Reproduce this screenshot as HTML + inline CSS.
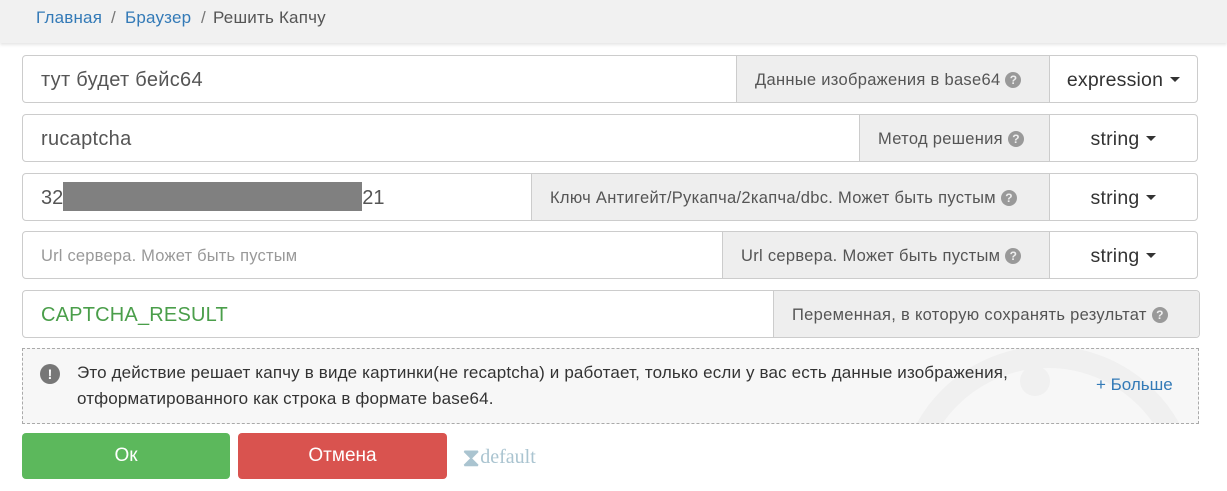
<!DOCTYPE html><html><head><meta charset="utf-8"><style>
html,body{margin:0;width:1227px;height:491px;overflow:hidden}
body{background:#fff;font-family:"Liberation Sans",sans-serif;position:relative}
.hdr{position:absolute;left:0;top:0;width:1227px;height:43px;background:#f1f1f1;box-shadow:0 2px 3px rgba(0,0,0,.1)}
.hdr span{position:absolute;top:8px;font-size:17px;letter-spacing:0.2px}
.row{position:absolute;left:22px;height:46px;border:1px solid #ccc;border-radius:4px;display:flex;overflow:hidden}
.in{flex:1;font-size:20px;letter-spacing:0.3px;color:#555;padding-left:18px;line-height:48px;white-space:nowrap}
.lab{background:#eee;border-left:1px solid #ccc;font-size:16.5px;letter-spacing:0.3px;color:#555;line-height:48px;padding-left:18px;box-sizing:border-box;white-space:nowrap}
.q{display:inline-block;width:16px;height:16px;border-radius:50%;background:#999;color:#eee;font-size:12px;font-weight:bold;line-height:16px;text-align:center;vertical-align:1px;margin-left:5px;letter-spacing:0}
.dd{width:147px;border-left:1px solid #ccc;font-size:19.5px;letter-spacing:0.2px;color:#333;line-height:48px;text-align:center}
.car{display:inline-block;border-left:5px solid transparent;border-right:5px solid transparent;border-top:5px solid #333;vertical-align:4px;margin-left:7px}
.btn{position:absolute;top:433px;height:46px;border-radius:4px;color:#fff;font-size:19px;line-height:46px;text-align:center}
</style></head><body>
<div class="hdr"><span style="left:36px;color:#337ab7">Главная</span><span style="left:111px;color:#777">/</span><span style="left:125px;color:#337ab7">Браузер</span><span style="left:201px;color:#777">/</span><span style="left:213px;color:#555">Решить Капчу</span></div>

<div class="row" style="top:55px;width:1174px"><div class="in">тут будет бейс64</div><div class="lab" style="width:313px">Данные изображения в base64<span class="q">?</span></div><div class="dd">expression<span class="car"></span></div></div>
<div class="row" style="top:114px;width:1174px"><div class="in">rucaptcha</div><div class="lab" style="width:190px">Метод решения<span class="q">?</span></div><div class="dd">string<span class="car"></span></div></div>
<div class="row" style="top:173px;width:1174px"><div class="in" style="letter-spacing:0">32<span style="display:inline-block;width:299px;height:29px;background:#808080;vertical-align:-7px"></span>21</div><div class="lab" style="width:518px">Ключ Антигейт/Рукапча/2капча/dbc. Может быть пустым<span class="q">?</span></div><div class="dd">string<span class="car"></span></div></div>
<div class="row" style="top:231px;width:1174px"><div class="in" style="font-size:16.5px;letter-spacing:0.2px;color:#999">Url сервера. Может быть пустым</div><div class="lab" style="width:327px">Url сервера. Может быть пустым<span class="q">?</span></div><div class="dd">string<span class="car"></span></div></div>
<div class="row" style="top:290px;width:1176px"><div class="in" style="color:#4a9e4a;letter-spacing:0.2px">CAPTCHA_RESULT</div><div class="lab" style="width:426px">Переменная, в которую сохранять результат<span class="q">?</span></div></div>

<div style="position:absolute;left:22px;top:348px;width:1175px;height:74px;border:1px dashed #aaa;background:#f7f7f7;overflow:hidden">
<div style="position:absolute;left:875px;top:-3px;width:300px;height:300px;border:22px solid #f0f0f0;border-radius:50%;box-sizing:border-box"></div>
<div style="position:absolute;left:997px;top:17px;width:30px;height:30px;border-radius:50%;background:#f0f0f0"></div>
<div style="position:absolute;left:17px;top:15px;width:20px;height:20px;border-radius:50%;background:#777;color:#fff;font-weight:bold;font-size:14px;line-height:20px;text-align:center">!</div>
<div style="position:absolute;left:54px;top:11px;font-size:17px;letter-spacing:0.15px;line-height:26px;color:#333;white-space:nowrap">Это действие решает капчу в виде картинки(не recaptcha) и работает, только если у вас есть данные изображения,<br>отформатированного как строка в формате base64.</div>
<div style="position:absolute;left:1073px;top:26px;font-size:17px;color:#337ab7">+ Больше</div>
</div>

<div class="btn" style="left:22px;width:208px;background:#5cb85c">Ок</div>
<div class="btn" style="left:238px;width:209px;background:#d9534f">Отмена</div>
<div style="position:absolute;left:462px;top:443px;font-family:'Liberation Serif',serif;font-size:20px;color:#aac4d0;white-space:nowrap"><span style="font-size:26px;vertical-align:-3px">⧗</span>default</div>
</body></html>
